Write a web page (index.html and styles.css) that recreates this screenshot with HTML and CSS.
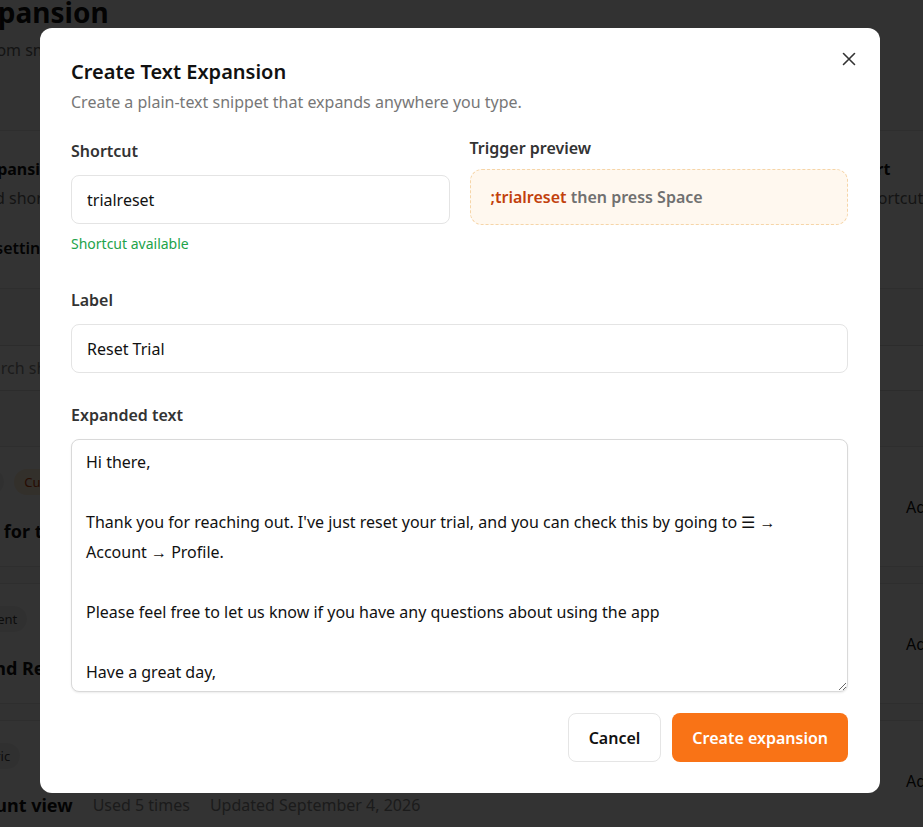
FILE: index.html
```html
<!DOCTYPE html>
<html lang="en">
<head>
  <meta charset="UTF-8">
  <meta name="viewport" content="width=device-width, initial-scale=1.0">
  <title>Text Expansion</title>
  <link rel="stylesheet" href="styles.css">
</head>
<body>
  <!-- Page behind the dialog -->
  <div class="page">
    <div class="page-head">
      <h1>Text Expansion</h1>
      <p>Manage custom snippets anywhere</p>
    </div>

    <section class="feature-card">
      <div class="feature-row">
        <div>
          <h2>Text expansion</h2>
          <p>Expand shortcuts into full text anywhere you type</p>
        </div>
        <div class="feature-stat">
          <strong>Instantly insert</strong>
          <span>before each shortcut</span>
        </div>
      </div>
      <div class="feature-link">Open settings</div>
    </section>

    <div class="search">Search shortcuts</div>

    <ul class="snippet-list">
      <li class="snippet">
        <div class="snippet-body">
          <div class="tags"><span class="tag">Sales</span><span class="tag tag-custom">Custom</span></div>
          <div class="snippet-title"><h3>Tools for trial users</h3><span>Used 12 times</span></div>
        </div>
        <div class="snippet-action">Add</div>
      </li>
      <li class="snippet">
        <div class="snippet-body">
          <div class="tags"><span class="tag">Excellent</span></div>
          <div class="snippet-title"><h3>Refund Request</h3><span>Used 8 times</span></div>
        </div>
        <div class="snippet-action">Add</div>
      </li>
      <li class="snippet">
        <div class="snippet-body">
          <div class="tags"><span class="tag">Generic</span></div>
          <div class="snippet-title"><h3>Account view</h3><span>Used 5 times</span><span>Updated September 4, 2026</span></div>
        </div>
        <div class="snippet-action">Add</div>
      </li>
    </ul>
  </div>

  <!-- Create dialog -->
  <div class="overlay">
    <div class="modal">
      <button class="close-btn" aria-label="Close">
        <svg width="24" height="24" viewBox="0 0 24 24" fill="none" stroke="currentColor" stroke-width="1.6" stroke-linecap="round">
          <path d="M6.5 6.5l11 11M17.5 6.5l-11 11"/>
        </svg>
      </button>

      <h2 class="modal-title">Create Text Expansion</h2>
      <p class="modal-sub">Create a plain-text snippet that expands anywhere you type.</p>

      <div class="field-grid">
        <div class="field">
          <label class="field-label" for="shortcut">Shortcut</label>
          <input class="text-input" type="text" id="shortcut" value="trialreset">
          <p class="hint">Shortcut available</p>
        </div>
        <div class="field field-preview">
          <span class="field-label">Trigger preview</span>
          <div class="preview"><span class="preview-key">;trialreset</span>&nbsp;then press Space</div>
        </div>
      </div>

      <div class="field field-label-row">
        <label class="field-label" for="label">Label</label>
        <input class="text-input" type="text" id="label" value="Reset Trial">
      </div>

      <div class="field field-text">
        <label class="field-label" for="expanded">Expanded text</label>
        <textarea class="text-area" id="expanded">Hi there,

Thank you for reaching out. I've just reset your trial, and you can check this by going to ☰ → Account → Profile.

Please feel free to let us know if you have any questions about using the app

Have a great day,</textarea>
      </div>

      <div class="actions">
        <button class="btn btn-cancel">Cancel</button>
        <button class="btn btn-primary">Create expansion</button>
      </div>
    </div>
  </div>
</body>
</html>
```

FILE: styles.css
```css
/* Base */
body {
  margin: 0;
  font-family: "Noto Sans", "Open Sans", sans-serif;
  color: #111;
  background: #fafafa;
  height: 100vh;
  overflow: hidden;
}

* {
  box-sizing: border-box;
}

/* Page behind the dialog */
.page {
  width: 1100px;
  margin-left: -100px;
}

.page-head h1 {
  margin: -5px 0 0;
  font-size: 28px;
  line-height: 34px;
  font-weight: 700;
}

.page-head p {
  margin: 9px 0 0;
  font-size: 16px;
  line-height: 24px;
  color: #666;
}

.feature-card {
  margin: 68px 24px 0;
  padding: 26px 24px 28px;
  background: #fff;
  border: 1px solid #e5e5e5;
  border-radius: 12px;
}

.feature-row {
  display: flex;
  justify-content: space-between;
}

.feature-row h2 {
  margin: 0 0 0 -8px;
  font-size: 16px;
  line-height: 24px;
}

.feature-row p {
  margin: 5px 0 0;
  line-height: 24px;
  color: #666;
}

.feature-stat {
  width: 184px;
  display: flex;
  flex-direction: column;
  gap: 5px;
  line-height: 24px;
  white-space: nowrap;
}

.feature-stat span {
  color: #666;
}

.feature-link {
  margin-top: 26px;
  font-weight: 600;
  line-height: 24px;
}

.search {
  margin: 56px 24px 0;
  height: 46px;
  padding-left: 49px;
  display: flex;
  align-items: center;
  background: #fff;
  border: 1px solid #ddd;
  border-radius: 10px;
  color: #888;
}

.snippet-list {
  list-style: none;
  margin: 55px 24px 0;
  padding: 0;
  display: flex;
  flex-direction: column;
  gap: 16px;
}

.snippet {
  display: flex;
  align-items: center;
  padding: 22px 24px 22px 28px;
  background: #fff;
  border: 1px solid #e5e5e5;
  border-radius: 12px;
}

.tags {
  display: flex;
  gap: 10px;
}

.tag {
  padding: 2px 10px;
  font-size: 13px;
  line-height: 22px;
  border-radius: 999px;
  background: #f1f1f1;
  color: #444;
}

.tag-custom {
  background: #ffedd5;
  color: #c2410c;
}

.snippet-title {
  margin-top: 23px;
  display: flex;
  align-items: center;
  gap: 20px;
  line-height: 26px;
  color: #888;
}

.snippet-title h3 {
  margin: 0;
  font-size: 18px;
  color: #111;
}

.snippet-action {
  margin-left: auto;
  width: 45px;
}

/* Dialog */
.overlay {
  position: fixed;
  inset: 0;
  padding: 28px 0 0 40px;
  background: rgba(0, 0, 0, 0.8);
}

.modal {
  position: relative;
  width: 840px;
  padding: 32px 32px 31px 31px;
  background: #fff;
  border-radius: 12px;
}

.close-btn {
  position: absolute;
  top: 19px;
  right: 19px;
  width: 24px;
  height: 24px;
  padding: 0;
  border: none;
  background: none;
  color: #333;
  cursor: pointer;
}

.modal-title {
  margin: 0;
  font-size: 20px;
  line-height: 24px;
  font-weight: 600;
  color: #111;
}

.modal-sub {
  margin: 6px 0 0;
  font-size: 16px;
  line-height: 24px;
  color: #777;
}

.field-grid {
  display: grid;
  grid-template-columns: 1fr 1fr;
  gap: 20px;
  margin-top: 25px;
}

.field-label {
  display: block;
  margin-bottom: 12px;
  font-size: 16px;
  line-height: 24px;
  font-weight: 600;
  color: #333;
}

.field-preview .field-label {
  margin: -3px 0 9px;
}

.text-input {
  display: block;
  width: 100%;
  height: 49px;
  padding: 0 15px;
  border: 1px solid #e4e4e4;
  border-radius: 8px;
  font: inherit;
  font-size: 16px;
  color: #111;
}

.hint {
  margin: 10px 0 0;
  font-size: 14px;
  line-height: 20px;
  color: #22a34a;
}

.preview {
  display: flex;
  align-items: center;
  height: 56px;
  padding: 0 20px;
  background: #fff8ef;
  border: 1px dashed #f6d5a8;
  border-radius: 12px;
  font-weight: 600;
  color: #707070;
}

.preview-key {
  color: #c2410c;
}

.field-label-row {
  margin-top: 34px;
}

.field-text {
  margin-top: 30px;
}

.text-area {
  display: block;
  width: 100%;
  height: 253px;
  padding: 7px 14px 4px;
  border: 1px solid #d9d9d9;
  border-radius: 8px;
  box-shadow: 0 1px 2px rgba(0, 0, 0, 0.08);
  font: inherit;
  font-size: 16px;
  line-height: 30px;
  color: #111;
  resize: vertical;
}

.actions {
  display: flex;
  justify-content: flex-end;
  gap: 11px;
  margin-top: 21px;
}

.btn {
  height: 49px;
  padding: 0 20px;
  border-radius: 8px;
  font: inherit;
  font-size: 16px;
  font-weight: 600;
  cursor: pointer;
}

.btn-cancel {
  background: #fff;
  border: 1px solid #e5e5e5;
  color: #111;
}

.btn-primary {
  background: #f97316;
  border: none;
  color: #fff;
}
```
